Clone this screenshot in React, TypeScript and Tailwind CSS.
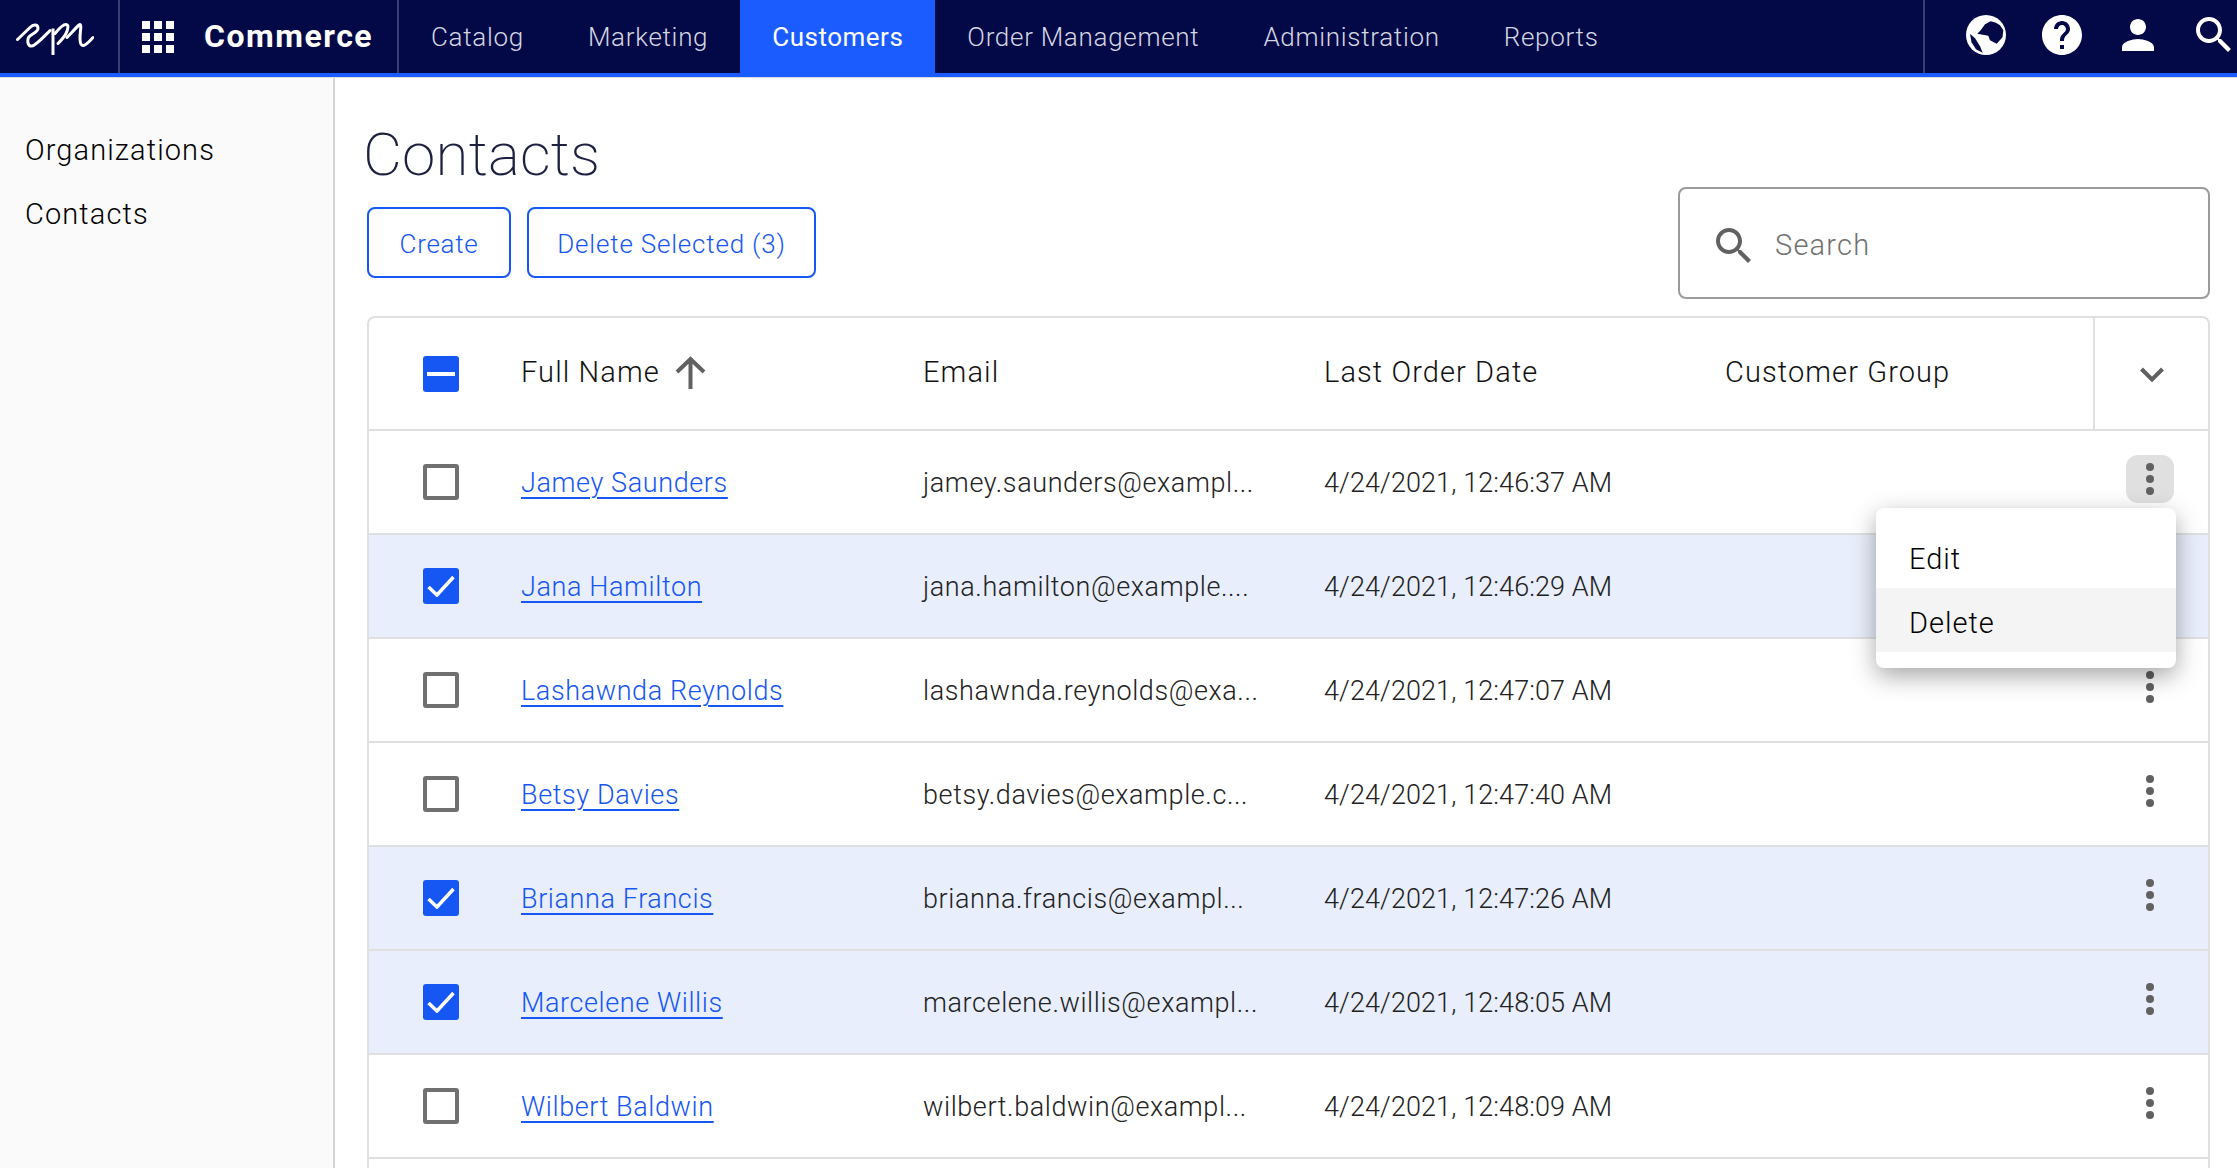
import React from 'react'

const font = { fontFamily: 'Roboto, sans-serif' }

const rows = [
  { name: 'Jamey Saunders', email: 'jamey.saunders@exampl...', date: '4/24/2021, 12:46:37 AM', on: false },
  { name: 'Jana Hamilton', email: 'jana.hamilton@example....', date: '4/24/2021, 12:46:29 AM', on: true },
  { name: 'Lashawnda Reynolds', email: 'lashawnda.reynolds@exa...', date: '4/24/2021, 12:47:07 AM', on: false },
  { name: 'Betsy Davies', email: 'betsy.davies@example.c...', date: '4/24/2021, 12:47:40 AM', on: false },
  { name: 'Brianna Francis', email: 'brianna.francis@exampl...', date: '4/24/2021, 12:47:26 AM', on: true },
  { name: 'Marcelene Willis', email: 'marcelene.willis@exampl...', date: '4/24/2021, 12:48:05 AM', on: true },
  { name: 'Wilbert Baldwin', email: 'wilbert.baldwin@exampl...', date: '4/24/2021, 12:48:09 AM', on: false },
]

const nav = ['Catalog', 'Marketing', 'Customers', 'Order Management', 'Administration', 'Reports']

function Logo() {
  return (
    <svg width="78" height="36" viewBox="16 18.5 78 36" fill="none" stroke="white" strokeWidth="3" strokeLinecap="round" strokeLinejoin="round">
      <path d="M17.5 39 L30 27 C34 23 38 24 38 28 C38 32 30 34 28.5 37 C27 41 28 46 32 45.5 C36 45 44 36 50 30" />
      <path d="M53 28 L53 55" strokeLinecap="butt" />
      <path d="M55 33 C59 28 63 24 66 24 C69 24 68 29 66 33 C64 37 60 41 58 43" />
      <path d="M67 37 C71 33 76 27 79 24.5 C81 23 81 26 80.5 30 C80 35 79 45 83 45 C86 45 90 40 93 37" />
    </svg>
  )
}

function Check({ state }: { state: 'on' | 'off' | 'mixed' }) {
  if (state === 'off') return <div className="h-[36px] w-[36px] rounded-[3px] border-[4px] border-[#707070]" />
  return (
    <div className="flex h-[36px] w-[36px] items-center justify-center rounded-[3px] bg-[#1656f2]">
      {state === 'on' ? (
        <svg width="28" height="22" viewBox="0 0 28 22" fill="none" stroke="white" strokeWidth="3.5"><path d="M1.5 12 L10 20 L26.5 2" /></svg>
      ) : (
        <div className="h-[4px] w-[28px] bg-white" />
      )}
    </div>
  )
}

function Kebab({ active }: { active?: boolean }) {
  return (
    <div className={`-mt-[6px] flex h-[48px] w-[48px] flex-col items-center justify-center gap-[4px] rounded-[12px] ${active ? 'bg-[#e0e0e0]' : ''}`}>
      <div className="h-[8px] w-[8px] rounded-full bg-[#616161]" />
      <div className="h-[8px] w-[8px] rounded-full bg-[#616161]" />
      <div className="h-[8px] w-[8px] rounded-full bg-[#616161]" />
    </div>
  )
}

export default function App() {
  return (
    <div className="relative flex h-[1168px] w-[2237px] flex-col overflow-hidden bg-white" style={font}>
      <header className="relative z-10 flex h-[77px] shrink-0 border-b-[4px] border-[#1a5cff] bg-[#030846] text-[26px] font-light text-[#d4d6e2] shadow-[0_1px_0_#dcdcdc]">
        <div className="flex w-[120px] items-center border-r-2 border-[#3a3e72] pl-[16px]">
          <Logo />
        </div>
        <div className="flex w-[279px] items-center border-r-2 border-[#3a3e72] pl-[22px]">
          <div className="grid w-[32px] grid-cols-3 gap-[4px]">
            {Array.from({ length: 9 }).map((_, i) => (
              <div key={i} className="h-[8px] bg-white" />
            ))}
          </div>
          <span className="mb-[2px] ml-[30px] text-[32px] font-bold tracking-[1.5px] text-white">Commerce</span>
        </div>
        <nav className="flex flex-1">
          {nav.map((n) => (
            <div key={n} className={`flex items-center px-[32px] pt-[2px] ${n === 'Customers' ? 'bg-[#1a5cff] font-normal tracking-[0.5px] text-white' : 'tracking-[0.7px]'}`}>{n}</div>
          ))}
        </nav>
        <div className="flex w-[314px] items-center border-l-2 border-[#3a3e72] pb-[3px] text-white">
          <svg className="ml-[37px] shrink-0" width="48" height="48" viewBox="2 5.8 48 48">
            <circle cx="26" cy="29.8" r="20" fill="white" />
            <path fill="#030846" d="M30.7 16 L25 19 L20.7 25 L17.3 28.5 L28.3 30.5 L30 35 L36.7 38.5 L42.5 32 L43.3 25 L40 20 L36 17.5 Z" />
            <path fill="#030846" d="M10 28.5 L15 33 L20 41 L22.7 47.5 L16 44 L11.5 37 Z" />
          </svg>
          <svg className="ml-[28px] shrink-0" width="48" height="48" viewBox="0 0 24 24" fill="white"><path d="M12 2C6.48 2 2 6.48 2 12s4.48 10 10 10 10-4.48 10-10S17.52 2 12 2zm1 17h-2v-2h2v2zm2.07-7.75l-.9.92C13.45 12.9 13 13.5 13 15h-2v-.5c0-1.1.45-2.1 1.17-2.83l1.24-1.26c.37-.36.59-.86.59-1.41 0-1.1-.9-2-2-2s-2 .9-2 2H8c0-2.21 1.79-4 4-4s4 1.79 4 4c0 .88-.36 1.68-.93 2.25z" /></svg>
          <svg className="ml-[28px] shrink-0" width="48" height="48" viewBox="0 0 24 24" fill="white"><path d="M12 12c2.21 0 4-1.79 4-4s-1.79-4-4-4-4 1.79-4 4 1.79 4 4 4zm0 2c-2.67 0-8 1.34-8 4v2h16v-2c0-2.66-5.33-4-8-4z" /></svg>
          <svg className="ml-[28px] shrink-0" width="48" height="48" viewBox="0 0 24 24" fill="white"><path d="M15.5 14h-.79l-.28-.27C15.41 12.59 16 11.11 16 9.5 16 5.91 13.09 3 9.5 3S3 5.91 3 9.5 5.91 16 9.5 16c1.61 0 3.09-.59 4.23-1.57l.27.28v.79l5 4.99L20.49 19l-4.99-5zm-6 0C7.01 14 5 11.99 5 9.5S7.01 5 9.5 5 14 7.01 14 9.5 11.99 14 9.5 14z" /></svg>
        </div>
      </header>

      <div className="flex flex-1">
        <aside className="w-[335px] shrink-0 border-r-2 border-[#d4d4d4] bg-[#fafafa] pl-[25px] pt-[42px] text-[29px] font-light text-[#000]">
          <div className="flex h-[64px] items-center tracking-[1.1px]">Organizations</div>
          <div className="flex h-[64px] items-center tracking-[1.1px]">Contacts</div>
        </aside>
        <main className="flex-1 pl-[32px] pr-[27px]">
          <div className="flex h-[239px] flex-col">
            <h1 className="mt-[43px] ml-[-4px] text-[60px] leading-[70px] font-extralight tracking-[0.2px] text-[#1c1f3f]">Contacts</h1>
            <div className="relative mt-[17px] flex gap-[16px] text-[26px] font-light text-[#1656f2]">
              <button className="h-[71px] w-[144px] rounded-[8px] border-2 border-[#1656f2] pt-[4px] tracking-[0.7px]">Create</button>
              <button className="h-[71px] w-[289px] rounded-[8px] border-2 border-[#1656f2] pt-[4px] tracking-[0.8px]">Delete Selected (3)</button>
              <div className="absolute right-0 top-[-20px] flex h-[112px] w-[532px] items-center rounded-[8px] border-2 border-[#9b9b9b] pl-[30px] pt-[6px] text-[29px] text-[#707070]">
                <svg width="48" height="48" viewBox="0 0 24 24" fill="#616161" className="shrink-0"><path d="M15.5 14h-.79l-.28-.27C15.41 12.59 16 11.11 16 9.5 16 5.91 13.09 3 9.5 3S3 5.91 3 9.5 5.91 16 9.5 16c1.61 0 3.09-.59 4.23-1.57l.27.28v.79l5 4.99L20.49 19l-4.99-5zm-6 0C7.01 14 5 11.99 5 9.5S7.01 5 9.5 5 14 7.01 14 9.5 11.99 14 9.5 14z" /></svg>
                <span className="ml-[17px] font-light tracking-[1.2px]">Search</span>
              </div>
            </div>
          </div>

          <div className="relative rounded-t-[8px] border-x-2 border-t-2 border-[#e0e0e0]">
            <div className="flex h-[113px] items-center border-b-2 border-[#e0e0e0] text-[29px] font-light tracking-[1.1px] text-[#111]">
              <div className="flex w-[152px] shrink-0 justify-start pl-[54px]"><Check state="mixed" /></div>
              <div className="flex w-[402px] shrink-0 items-center pb-[2px]">
                Full Name
                <svg className="ml-[15px]" width="31" height="33" viewBox="0 0 31 33" fill="none" stroke="#616161" strokeWidth="4"><path d="M15.5 33 V3 M2 16 L15.5 3 L29 16" /></svg>
              </div>
              <div className="w-[401px] shrink-0 pb-[2px]">Email</div>
              <div className="w-[401px] shrink-0 pb-[2px]">Last Order Date</div>
              <div className="w-[368px] shrink-0 pb-[2px]">Customer Group</div>
              <div className="flex h-full flex-1 items-center justify-center border-l-2 border-[#e0e0e0]">
                <svg className="mt-[2px]" width="24" height="15" viewBox="0 0 24 15" fill="none" stroke="#616161" strokeWidth="4"><path d="M1.5 2 L12 12.5 L22.5 2" /></svg>
              </div>
            </div>
            {rows.map((r) => (
              <div key={r.name} className={`flex h-[104px] items-center border-b-2 border-[#e0e0e0] text-[27px] font-light ${r.on ? 'bg-[#e8eefb]' : ''}`}>
                <div className="flex w-[152px] shrink-0 justify-start pl-[54px]"><Check state={r.on ? 'on' : 'off'} /></div>
                <div className="w-[402px] shrink-0 pt-[2px] tracking-[0.6px]"><a className="text-[#1656f2] underline decoration-2 underline-offset-[5px]">{r.name}</a></div>
                <div className="w-[401px] shrink-0 pt-[2px] tracking-[0.6px] text-[#222]">{r.email}</div>
                <div className="w-[401px] shrink-0 pt-[2px] tracking-[0.1px] text-[#222]">{r.date}</div>
                <div className="flex-1" />
                <div className="mr-[34px]"><Kebab active={r.name === 'Jamey Saunders'} /></div>
              </div>
            ))}
            <div className="h-[104px] border-b-2 border-[#e0e0e0]" />
            <div className="absolute left-[1507px] top-[190px] w-[300px] rounded-[8px] bg-white py-[16px] text-[29px] font-light tracking-[1px] text-[#000] shadow-[0_8px_24px_rgba(0,0,0,0.35)]">
              <div className="flex h-[64px] items-center px-[33px] pt-[7px]">Edit</div>
              <div className="flex h-[64px] items-center bg-[#f4f4f4] px-[33px] pt-[7px]">Delete</div>
            </div>
          </div>
        </main>
      </div>
    </div>
  )
}
